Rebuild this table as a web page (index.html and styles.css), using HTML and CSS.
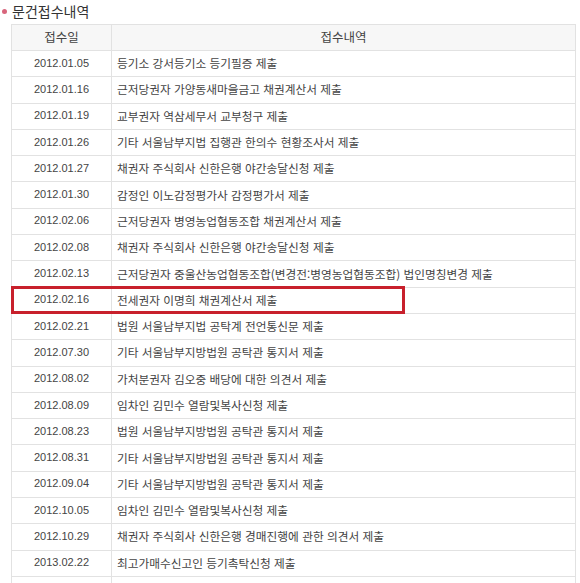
FILE: index.html
```html
<!DOCTYPE html>
<html lang="ko">
<head>
<meta charset="utf-8">
<title>문건접수내역</title>
<link rel="stylesheet" href="styles.css">
</head>
<body>
<div class="page">
  <h2 class="title"><span class="dot"></span>문건접수내역</h2>
  <div class="table-wrap">
    <table class="list">
      <thead>
        <tr><th class="c-date">접수일</th><th class="c-desc">접수내역</th></tr>
      </thead>
      <tbody>
        <tr><td class="c-date">2012.01.05</td><td class="c-desc">등기소 강서등기소 등기필증 제출</td></tr>
        <tr><td class="c-date">2012.01.16</td><td class="c-desc">근저당권자 가양동새마을금고 채권계산서 제출</td></tr>
        <tr><td class="c-date">2012.01.19</td><td class="c-desc">교부권자 역삼세무서 교부청구 제출</td></tr>
        <tr><td class="c-date">2012.01.26</td><td class="c-desc">기타 서울남부지법 집행관 한의수 현황조사서 제출</td></tr>
        <tr><td class="c-date">2012.01.27</td><td class="c-desc">채권자 주식회사 신한은행 야간송달신청 제출</td></tr>
        <tr><td class="c-date">2012.01.30</td><td class="c-desc">감정인 이노감정평가사 감정평가서 제출</td></tr>
        <tr><td class="c-date">2012.02.06</td><td class="c-desc">근저당권자 병영농업협동조합 채권계산서 제출</td></tr>
        <tr><td class="c-date">2012.02.08</td><td class="c-desc">채권자 주식회사 신한은행 야간송달신청 제출</td></tr>
        <tr><td class="c-date">2012.02.13</td><td class="c-desc">근저당권자 중울산농업협동조합(변경전:병영농업협동조합) 법인명칭변경 제출</td></tr>
        <tr class="marked"><td class="c-date">2012.02.16</td><td class="c-desc">전세권자 이명희 채권계산서 제출<span class="mark"></span></td></tr>
        <tr><td class="c-date">2012.02.21</td><td class="c-desc">법원 서울남부지법 공탁계 전언통신문 제출</td></tr>
        <tr><td class="c-date">2012.07.30</td><td class="c-desc">기타 서울남부지방법원 공탁관 통지서 제출</td></tr>
        <tr><td class="c-date">2012.08.02</td><td class="c-desc">가처분권자 김오중 배당에 대한 의견서 제출</td></tr>
        <tr><td class="c-date">2012.08.09</td><td class="c-desc">임차인 김민수 열람및복사신청 제출</td></tr>
        <tr><td class="c-date">2012.08.23</td><td class="c-desc">법원 서울남부지방법원 공탁관 통지서 제출</td></tr>
        <tr><td class="c-date">2012.08.31</td><td class="c-desc">기타 서울남부지방법원 공탁관 통지서 제출</td></tr>
        <tr><td class="c-date">2012.09.04</td><td class="c-desc">기타 서울남부지방법원 공탁관 통지서 제출</td></tr>
        <tr><td class="c-date">2012.10.05</td><td class="c-desc">임차인 김민수 열람및복사신청 제출</td></tr>
        <tr><td class="c-date">2012.10.29</td><td class="c-desc">채권자 주식회사 신한은행 경매진행에 관한 의견서 제출</td></tr>
        <tr><td class="c-date">2013.02.22</td><td class="c-desc">최고가매수신고인 등기촉탁신청 제출</td></tr>
        <tr><td class="c-date">&nbsp;</td><td class="c-desc">&nbsp;</td></tr>
      </tbody>
    </table>
  </div>
</div>
</body>
</html>
```

FILE: styles.css
```css
html, body {
  margin: 0;
  padding: 0;
  background: #fff;
}

.page {
  font-family: "Liberation Sans", "Noto Sans CJK KR", sans-serif;
  color: #444;
  overflow: hidden;
  height: 583px;
}

.title {
  margin: 0;
  padding: 0 0 0 2px;
  height: 24px;
  display: flex;
  align-items: flex-start;
  gap: 5px;
  font-family: "Noto Sans CJK KR", sans-serif;
  font-size: 14px;
  font-weight: normal;
  color: #333;
  line-height: 22px;
  box-sizing: border-box;
}

.dot {
  width: 5px;
  height: 5px;
  border-radius: 50%;
  background: #d8657c;
  margin-top: 9px;
}

.table-wrap {
  padding: 0 4px 0 11px;
}

.list {
  width: 100%;
  border-collapse: collapse;
  font-size: 11px;
  table-layout: fixed;
}

.list th,
.list td {
  border: 1px solid #e2e2e2;
  height: 26.3px;
  padding: 0 5px 2px;
  box-sizing: border-box;
  white-space: nowrap;
  font-weight: normal;
}

.list thead th {
  height: 26px;
  background: #f7f7f7;
  font-family: "Noto Sans CJK KR", sans-serif;
  font-size: 12.5px;
  color: #444;
}

.list .c-date {
  width: 100px;
  text-align: center;
}

.list td.c-desc {
  text-align: left;
  font-family: "Noto Sans CJK KR", sans-serif;
  font-size: 11.7px;
}

.list th.c-desc {
  text-align: center;
}

.marked td.c-desc {
  position: relative;
}

.mark {
  position: absolute;
  left: -101px;
  top: -2px;
  width: 394px;
  height: 28px;
  border: 3px solid #c8202c;
  box-sizing: border-box;
  pointer-events: none;
}
```
